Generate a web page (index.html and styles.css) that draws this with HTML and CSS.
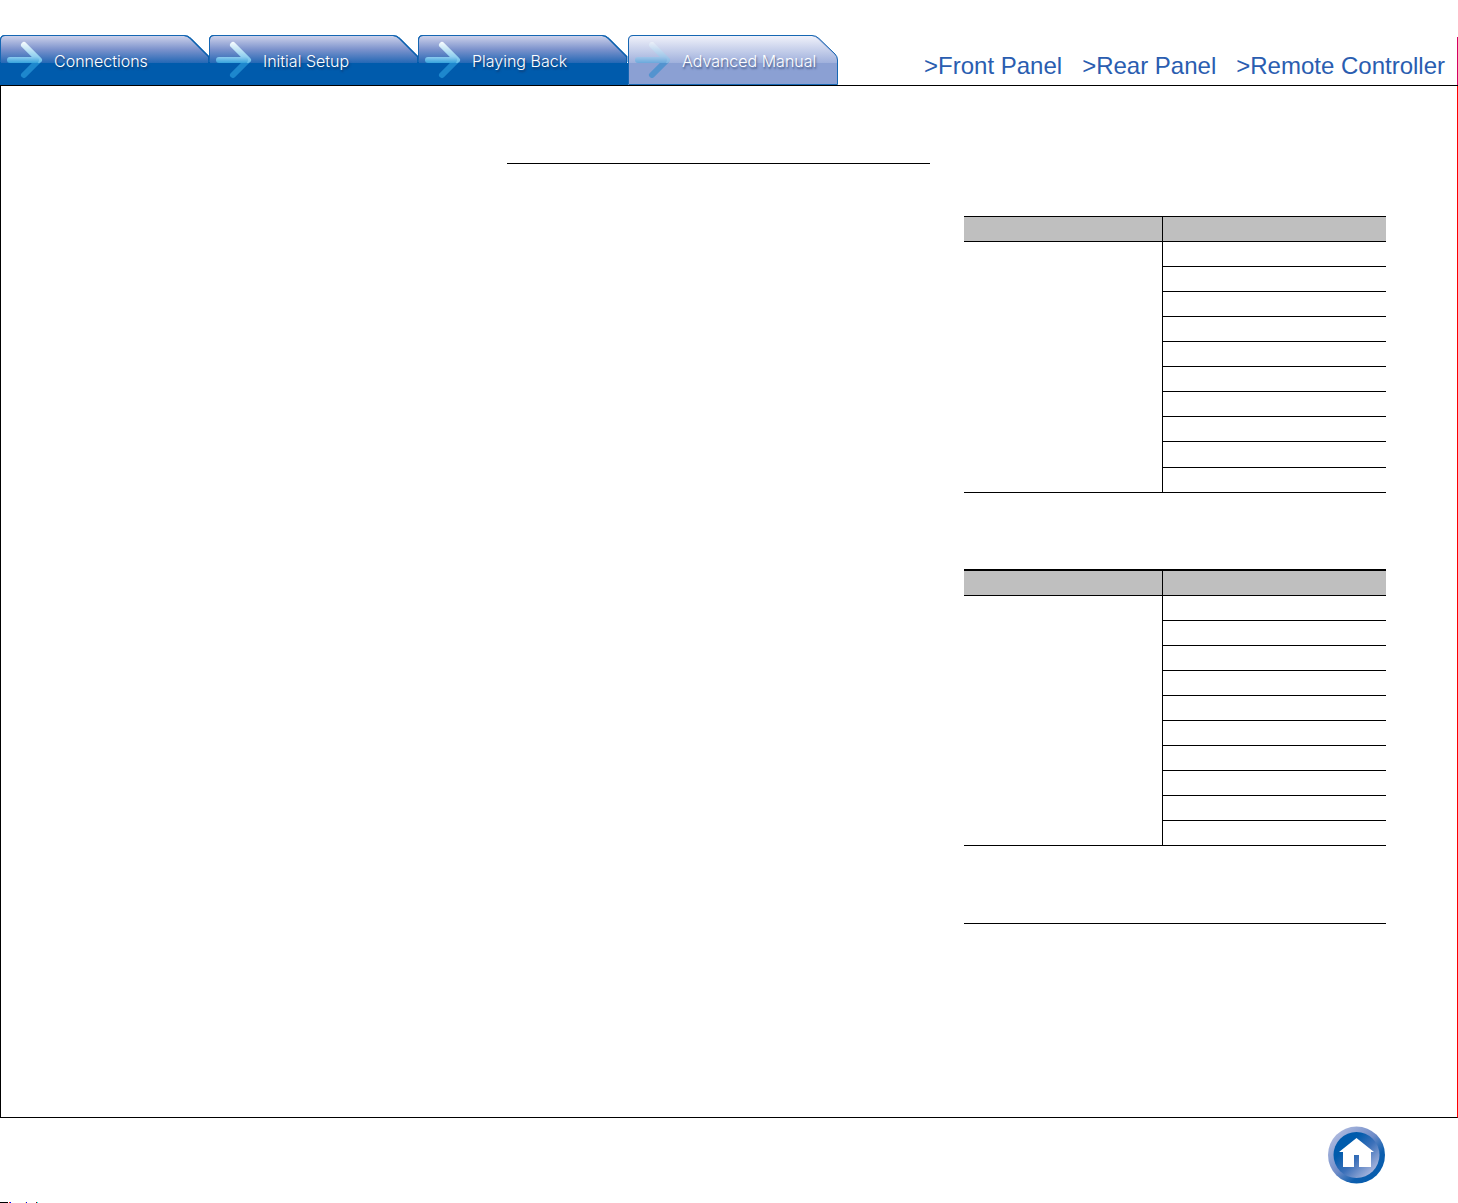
FILE: index.html
```html
<!DOCTYPE html>
<html lang="en">
<head>
<meta charset="utf-8">
<meta name="viewport" content="width=device-width, initial-scale=1">
<title>Advanced Manual</title>
<link rel="stylesheet" href="styles.css">
</head>
<body>
<svg class="defs" aria-hidden="true">
  <defs>
    <linearGradient id="gloss" x1="0" y1="0" x2="0" y2="1"><stop offset="0" stop-color="#cdd1ea"/><stop offset=".5" stop-color="#7b92cc"/><stop offset="1" stop-color="#2468b5"/></linearGradient>
    <linearGradient id="glossLight" x1="0" y1="0" x2="0" y2="1"><stop offset="0" stop-color="#f0f1fa"/><stop offset="1" stop-color="#9fb0dc"/></linearGradient>
    <linearGradient id="shaft" x1="0" y1="0" x2="0" y2="1"><stop offset="0" stop-color="#8ccbef"/><stop offset="1" stop-color="#36a3dc"/></linearGradient>
    <linearGradient id="head" gradientUnits="userSpaceOnUse" x1="0" y1="7" x2="0" y2="29"><stop offset="0" stop-color="#fff"/><stop offset="1" stop-color="#62bce9"/></linearGradient>
    <symbol id="arrow" viewBox="0 0 46 51">
      <path d="M24 41L38 27" fill="none" stroke="#1d87cd" stroke-width="6" stroke-linecap="round"/>
      <path d="M24 11L39 26" fill="none" stroke="url(#head)" stroke-width="6" stroke-linecap="round"/>
      <rect x="7" y="23" width="32" height="6" rx="3" fill="url(#shaft)"/>
    </symbol>
    <symbol id="tab" viewBox="0 0 210 51">
      <path d="M0 51V6Q0 1 5 1H184Q188 1 191 4L209 22V51Z" fill="#005bac"/>
      <path d="M1 29V6Q1 2 5 2H184Q187 2 190 5L208 23V29Z" fill="url(#gloss)"/>
      <path d="M.5 28V6Q.5 1.500 5 1.500H184Q188 1.500 191 4.500L209 22.500V28" fill="none" stroke="#1667b3"/>
    </symbol>
    <symbol id="tabLight" viewBox="0 0 210 51">
      <path d="M.5 50.500V6Q.5 1.500 5 1.500H184Q188 1.500 191 4.500L207 20Q209.500 22.500 209.500 26V50.500Z" fill="#8ba0d3"/>
      <path d="M1 29V6Q1 2 5 2H184Q187 2 190 5L207 21Q209 23 209 26V29Z" fill="url(#glossLight)"/>
      <path d="M.5 50.500V6Q.5 1.500 5 1.500H184Q188 1.500 191 4.500L207 20Q209.500 22.500 209.500 26V50.500Z" fill="none" stroke="#1667b3"/>
    </symbol>
  </defs>
</svg>
<header class="header">
  <nav class="tabs" aria-label="Chapters">
    <a class="tab" href="#connections"><svg class="tab-shape" aria-hidden="true"><use href="#tab"/></svg><svg class="tab-arrow" aria-hidden="true"><use href="#arrow"/></svg><span>Connections</span></a>
    <a class="tab" href="#setup"><svg class="tab-shape" aria-hidden="true"><use href="#tab"/></svg><svg class="tab-arrow" aria-hidden="true"><use href="#arrow"/></svg><span>Initial Setup</span></a>
    <a class="tab" href="#playing"><svg class="tab-shape" aria-hidden="true"><use href="#tab"/></svg><svg class="tab-arrow" aria-hidden="true"><use href="#arrow"/></svg><span>Playing Back</span></a>
    <a class="tab tab-current" href="#advanced" aria-current="page"><svg class="tab-shape" aria-hidden="true"><use href="#tabLight"/></svg><svg class="tab-arrow" aria-hidden="true"><use href="#arrow"/></svg><span>Advanced Manual</span></a>
  </nav>
  <nav class="links" aria-label="Device views">
    <a href="#front">&gt;Front Panel</a>
    <a href="#rear">&gt;Rear Panel</a>
    <a href="#remote">&gt;Remote Controller</a>
  </nav>
</header>
<main class="sheet">
  <section></section>
  <section><hr class="rule rule-top"></section>
  <section class="tables">
    <table class="codes">
      <thead><tr><th></th><th></th></tr></thead>
      <tbody>
        <tr><td rowspan="10"></td><td></td></tr>
        <tr><td></td></tr><tr><td></td></tr><tr><td></td></tr><tr><td></td></tr><tr><td></td></tr><tr><td></td></tr><tr><td></td></tr><tr class="tall"><td></td></tr><tr><td></td></tr>
      </tbody>
    </table>
    <table class="codes codes-strong">
      <thead><tr><th></th><th></th></tr></thead>
      <tbody>
        <tr><td rowspan="10"></td><td></td></tr>
        <tr><td></td></tr><tr><td></td></tr><tr><td></td></tr><tr><td></td></tr><tr><td></td></tr><tr><td></td></tr><tr><td></td></tr><tr><td></td></tr><tr><td></td></tr>
      </tbody>
    </table>
    <hr class="rule rule-end">
  </section>
</main>
<footer class="footer">
  <a class="home" href="#home" aria-label="Home">
    <svg viewBox="0 0 58 58" aria-hidden="true">
      <defs>
        <linearGradient id="ring" x1="0" y1="0" x2="1" y2="1"><stop offset=".15" stop-color="#a9b6dd"/><stop offset=".48" stop-color="#6f8cc8"/><stop offset=".7" stop-color="#0d5eae"/><stop offset="1" stop-color="#005bac"/></linearGradient>
        <linearGradient id="disc" x1="0" y1="0" x2="1" y2="1"><stop offset=".3" stop-color="#005bac"/><stop offset=".55" stop-color="#3c70b9"/><stop offset=".85" stop-color="#a4b3dc"/></linearGradient>
      </defs>
      <circle cx="28.500" cy="29" r="28.500" fill="url(#ring)"/>
      <circle cx="28.500" cy="29" r="23" fill="url(#disc)"/>
      <path d="M28.500 12L46 26H43V41H31V29H26V41H15V26H11Z" fill="#fff"/>
    </svg>
  </a>
  <svg class="edge-marks" viewBox="0 0 40 1" aria-hidden="true"><path d="M0 0H8V1H0Z"/><path d="M9 0h1v1h-1z" fill="#f33"/><path d="M10 0h1v1h-1zM26 0h1v1h-1z" fill="#00f"/><path d="M25 0h1v1h-1z" fill="#ff8"/><path d="M36 0h1v1h-1z" fill="#800"/><path d="M37 0h1v1h-1z" fill="#0ff"/></svg>
</footer>
</body>
</html>
```
FILE: styles.css
```css
* { box-sizing: border-box; }
body {
  margin: 0;
  min-height: 100vh;
  display: flex;
  flex-direction: column;
  background: #fff;
  font-family: "Liberation Sans", Arial, sans-serif;
}
.defs { position: absolute; width: 0; height: 0; }
.header {
  display: flex;
  justify-content: space-between;
  align-items: flex-end;
  padding-top: 34px;
  border-bottom: 1px solid #000;
  background: linear-gradient(#d8005f, #d8005f) right bottom / 1px calc(100% - 37px) no-repeat;
}
.tabs { display: flex; }
.tab {
  position: relative;
  display: flex;
  align-items: center;
  width: 210px;
  height: 51px;
  margin-right: -1px;
  padding-top: 2px;
  color: #fff;
  font-family: Inter, "Liberation Sans", sans-serif;
  font-size: 16px;
  font-weight: 300;
  line-height: 20px;
  text-decoration: none;
  white-space: nowrap;
  text-shadow: 1px 2px 2px #123a70;
  background: linear-gradient(#0000 29px, #005bac 29px);
}
.tab-current { margin: 0 0 0 1px; background: none; text-shadow: 1px 2px 2px #465a88; }
.tab-shape { position: absolute; inset: 0; width: 100%; height: 100%; }
.tab-arrow { position: absolute; left: 0; top: 0; width: 46px; height: 51px; }
.tab-current .tab-arrow { opacity: .5; }
.tab span { position: relative; padding-left: 54px; }
.links { display: flex; gap: 20px; padding: 0 13px 6px 0; }
.links a {
  color: #2a5db0;
  font-size: 24px;
  line-height: 26px;
  text-decoration: none;
  white-space: nowrap;
}
.sheet {
  flex: 1;
  display: grid;
  grid-template-columns: repeat(3, 1fr);
  gap: 34px;
  padding: 0 71px 0 50px;
  border: solid #000;
  border-width: 0 1px 1px;
  border-right-color: #f00;
}
.rule { height: 1px; margin: 0; border: 0; background: #000; }
.rule-top { margin-top: 77px; }
.rule-end { margin-top: 77px; }
.tables { padding-top: 130px; }
.codes {
  width: 100%;
  table-layout: fixed;
  border-collapse: separate;
  border-spacing: 0;
  border-top: 1px solid #000;
}
.codes-strong { margin-top: 76px; border-top-width: 2px; }
.codes th, .codes td { height: 25px; padding: 0; border-bottom: 1px solid #000; }
.codes .tall td { height: 26px; }
.codes th { background: #bfbfbf; }
.codes th:first-child { width: 47%; }
.codes th:last-child, .codes td:last-child:not([rowspan]) { border-left: 1px solid #000; }
.footer { position: relative; display: flex; justify-content: flex-end; padding: 8px 72px 19px; }
.home, .home svg { display: block; width: 58px; height: 58px; }
.edge-marks { position: absolute; left: 0; bottom: 0; width: 40px; height: 1px; }
```
